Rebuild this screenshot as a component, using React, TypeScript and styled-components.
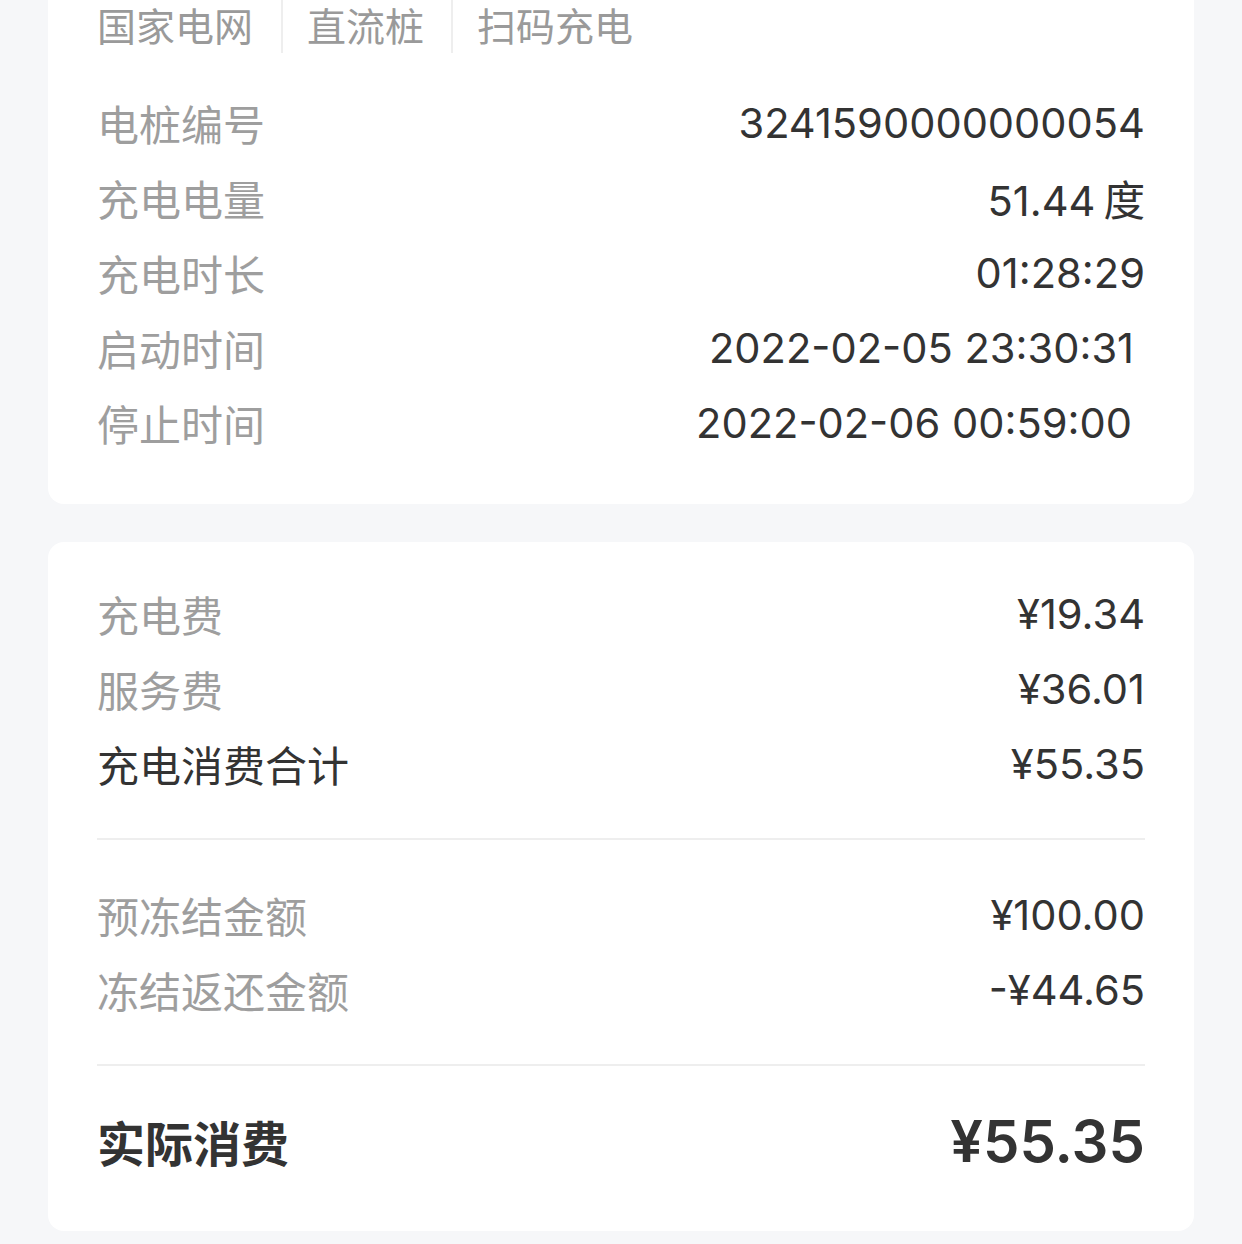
import styled, { createGlobalStyle } from "styled-components";

const GlobalStyle = createGlobalStyle`
  html, body {
    margin: 0;
    padding: 0;
    background: #f6f7f9;
  }
  body {
    font-family: "Noto Sans CJK SC", "Noto Sans", sans-serif;
    -webkit-font-smoothing: antialiased;
  }
`;

const Page = styled.div`
  display: flex;
  flex-direction: column;
  gap: 38px;
  padding: 0 48px 14px;
`;

const Card = styled.div<{ $top?: boolean }>`
  background: #fff;
  border-radius: ${(p) => (p.$top ? "0 0 16px 16px" : "16px")};
  padding: ${(p) => (p.$top ? "0 49px 44px" : "34px 49px 52px")};
  display: flex;
  flex-direction: column;
`;

const TagBar = styled.div`
  display: flex;
  align-items: stretch;
  height: 53px;
  margin-bottom: 32px;
`;

const Tag = styled.div<{ $first?: boolean }>`
  display: flex;
  align-items: flex-end;
  padding: ${(p) => (p.$first ? "0 28px 9px 0" : "0 27px 9px 24px")};
  font-size: 39px;
  line-height: 40px;
  color: #9a9a9a;
  border-left: ${(p) => (p.$first ? "none" : "2px solid #eeeeee")};
  &:last-child {
    padding-right: 0;
  }
`;

const Row = styled.div<{ $big?: boolean }>`
  display: flex;
  justify-content: space-between;
  align-items: center;
  height: ${(p) => (p.$big ? "76px" : "75px")};
`;

const Label = styled.span<{ $dark?: boolean; $big?: boolean }>`
  font-size: ${(p) => (p.$big ? "48px" : "42px")};
  font-weight: ${(p) => (p.$big ? 700 : 400)};
  color: ${(p) => (p.$dark || p.$big ? "#333333" : "#9e9e9e")};
`;

const Value = styled.span<{ $big?: boolean; $inset?: number }>`
  font-family: Inter, "Noto Sans", "Noto Sans CJK SC", sans-serif;
  font-size: ${(p) => (p.$big ? "58px" : "41.6px")};
  font-weight: ${(p) => (p.$big ? 600 : 400)};
  color: #333333;
  padding-right: ${(p) => p.$inset ?? 0}px;
`;

const Unit = styled.span`
  font-family: "Noto Sans CJK SC", sans-serif;
  margin-left: 8px;
`;

const Divider = styled.div`
  height: 2px;
  background: #eeeeee;
  margin: 37px 0;
`;

type Item = { label: string; value: string; inset?: number; dark?: boolean };

const details: Item[] = [
  { label: "电桩编号", value: "3241590000000054" },
  { label: "充电电量", value: "51.44" },
  { label: "充电时长", value: "01:28:29" },
  { label: "启动时间", value: "2022-02-05 23:30:31", inset: 11 },
  { label: "停止时间", value: "2022-02-06 00:59:00", inset: 13 },
];

const fees: Item[] = [
  { label: "充电费", value: "¥19.34" },
  { label: "服务费", value: "¥36.01" },
  { label: "充电消费合计", value: "¥55.35", dark: true },
];

const freeze: Item[] = [
  { label: "预冻结金额", value: "¥100.00" },
  { label: "冻结返还金额", value: "-¥44.65" },
];

const renderRows = (items: Item[]) =>
  items.map((it) => (
    <Row key={it.label}>
      <Label $dark={it.dark}>{it.label}</Label>
      <Value $inset={it.inset}>
        {it.value}
        {it.label === "充电电量" && <Unit>度</Unit>}
      </Value>
    </Row>
  ));

export default function App() {
  return (
    <>
      <GlobalStyle />
      <Page>
        <Card $top>
          <TagBar>
            <Tag $first>国家电网</Tag>
            <Tag>直流桩</Tag>
            <Tag>扫码充电</Tag>
          </TagBar>
          {renderRows(details)}
        </Card>
        <Card>
          {renderRows(fees)}
          <Divider />
          {renderRows(freeze)}
          <Divider />
          <Row $big>
            <Label $big>实际消费</Label>
            <Value $big>¥55.35</Value>
          </Row>
        </Card>
      </Page>
    </>
  );
}
